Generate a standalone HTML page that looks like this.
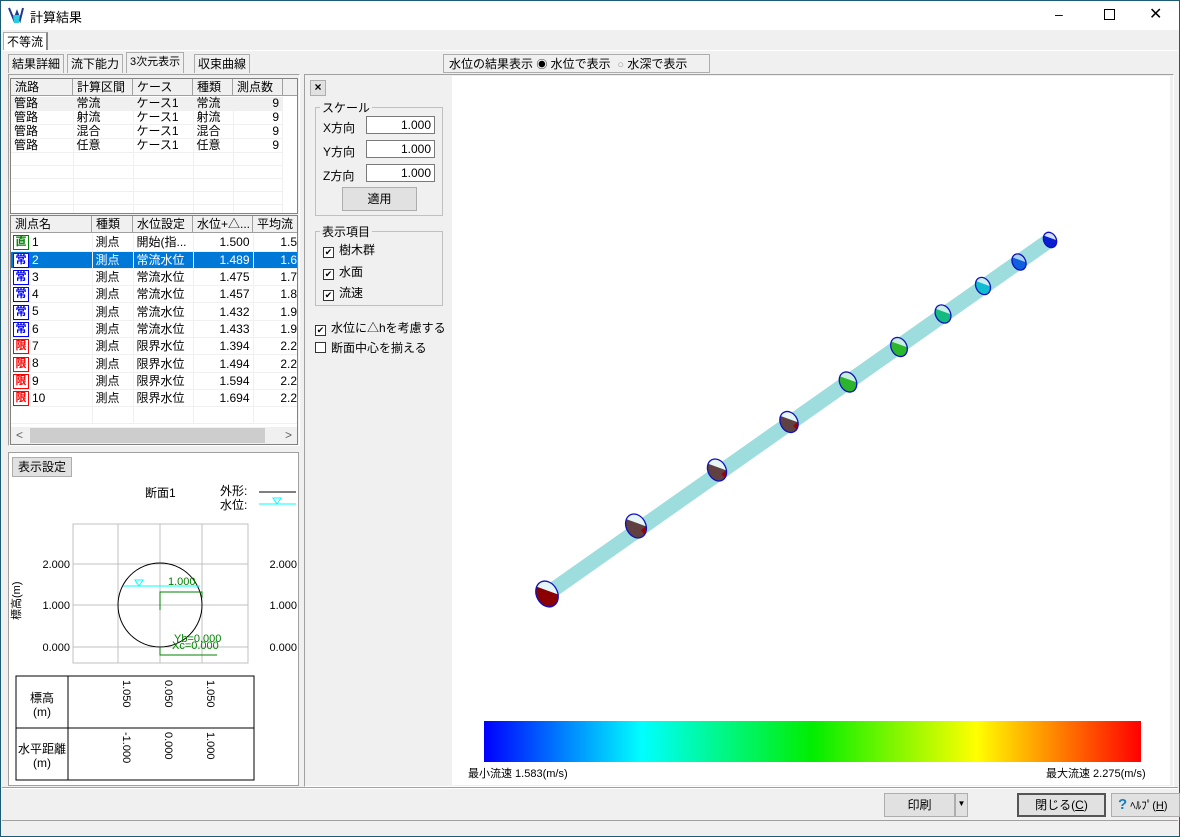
<!DOCTYPE html>
<html><head><meta charset="utf-8"><style>
*{box-sizing:border-box;margin:0;padding:0}
body{width:1180px;height:837px;overflow:hidden;background:#f0f0f0;font-family:"Liberation Sans","Noto Sans CJK JP",sans-serif;font-size:12px;color:#000;position:relative}
.a{position:absolute}
.btn{position:absolute;background:#e1e1e1;border:1px solid #adadad;text-align:center;font-size:12px}
.tab{position:absolute;border:1px solid #adadad;border-bottom:none;background:#f0f0f0;padding:2px 3px;font-size:12px;line-height:14px}
table{border-collapse:collapse}
.lst td{height:13px;line-height:13px;padding:0 3px;border-right:1px solid #f0f0f0;border-bottom:1px solid #f0f0f0;white-space:nowrap;font-size:12px}
.hd{position:absolute;background:#f0f0f0;border-right:1px solid #a0a0a0;border-bottom:1px solid #a0a0a0;height:17px;line-height:16px;padding-left:4px;font-size:12px}
.r td{height:17px;line-height:16px;padding:0 3px;border-right:1px solid #f0f0f0;border-bottom:1px solid #f0f0f0;font-size:12px;white-space:nowrap}
.ic{display:inline-block;width:16px;height:15px;border:1px solid;font-size:11px;line-height:13px;text-align:center;font-weight:bold;vertical-align:middle;margin-right:3px}
.cb{display:inline-block;width:11px;height:11px;border:1px solid #333;background:#fff;vertical-align:-1px;margin-right:5px;font-size:9px;line-height:9px;text-align:center}
.inp{position:absolute;background:#fff;border:1px solid #7a7a7a;text-align:right;padding-right:3px;height:18px;line-height:16px}
</style></head><body>
<div class="a" style="left:0;top:0;width:1180px;height:837px;border:1px solid #1d5a73"></div>
<div class="a" style="left:1px;top:1px;width:1178px;height:29px;background:#fff"></div>
<div class="a" style="left:8px;top:6px;width:16px;height:18px"><svg width="16" height="18"><path d="M1 2L6 14L9 6L12 14L15 2" stroke="#1a3a8a" stroke-width="2" fill="none"/><path d="M5 9h7l-1 8h-5z" fill="#2cc9e0"/></svg></div>
<div class="a" style="left:30px;top:7px;font-size:13px">計算結果</div>
<div class="a" style="left:1055px;top:6px;font-size:14px">–</div>
<div class="a" style="left:1104px;top:9px;width:11px;height:11px;border:1px solid #000"></div>
<div class="a" style="left:1149px;top:4px;font-size:16px">✕</div>

<div class="tab" style="left:3px;top:32px;height:18px;background:#fff;border-right:2px solid #888">不等流</div>
<div class="a" style="left:2px;top:50px;width:1176px;height:1px;background:#fff"></div>
<div class="tab" style="left:8px;top:54px;height:19px">結果詳細</div>
<div class="tab" style="left:67px;top:54px;height:19px">流下能力</div>
<div class="tab" style="left:126px;top:52px;height:21px;background:#f0f0f0;font-size:11px">3次元表示</div>
<div class="tab" style="left:194px;top:54px;height:19px">収束曲線</div>
<div class="a" style="left:443px;top:54px;width:267px;height:19px;border:1px solid #adadad;background:#f0f0f0;padding:2px 5px;font-size:12px;line-height:14px">水位の結果表示 <span style="font-size:11px">◉</span> 水位で表示 &nbsp;<span style="font-size:11px;color:#999">○</span> 水深で表示</div>

<!-- left panel -->
<div class="a" style="left:8px;top:74px;width:292px;height:372px;border:1px solid #fff;border-left-color:#a0a0a0;border-top-color:#a0a0a0"></div>
<div class="a" style="left:10px;top:78px;width:288px;height:136px;background:#fff;border:1px solid #828282;overflow:hidden">
<div class="hd" style="left:0;top:0;width:62px">流路</div><div class="hd" style="left:62px;top:0;width:60px">計算区間</div><div class="hd" style="left:122px;top:0;width:60px">ケース</div><div class="hd" style="left:182px;top:0;width:40px">種類</div><div class="hd" style="left:222px;top:0;width:50px">測点数</div><div class="hd" style="left:272px;top:0;width:20px"></div>
<table class="lst a" style="left:0;top:18px;width:272px">
<tr style="background:#f0f0f0"><td style="width:62px">管路</td><td style="width:60px">常流</td><td style="width:60px">ケース1</td><td style="width:40px">常流</td><td style="text-align:right">9</td></tr>
<tr><td>管路</td><td>射流</td><td>ケース1</td><td>射流</td><td style="text-align:right">9</td></tr>
<tr><td>管路</td><td>混合</td><td>ケース1</td><td>混合</td><td style="text-align:right">9</td></tr>
<tr><td>管路</td><td>任意</td><td>ケース1</td><td>任意</td><td style="text-align:right">9</td></tr>
<tr><td></td><td></td><td></td><td></td><td></td></tr><tr><td></td><td></td><td></td><td></td><td></td></tr><tr><td></td><td></td><td></td><td></td><td></td></tr><tr><td></td><td></td><td></td><td></td><td></td></tr><tr><td></td><td></td><td></td><td></td><td></td></tr>
</table></div>

<div class="a" style="left:10px;top:215px;width:288px;height:230px;background:#fff;border:1px solid #828282;overflow:hidden">
<div class="hd" style="left:0;top:0;width:81px">測点名</div><div class="hd" style="left:81px;top:0;width:41px">種類</div><div class="hd" style="left:122px;top:0;width:60px">水位設定</div><div class="hd" style="left:182px;top:0;width:60px">水位+△...</div><div class="hd" style="left:242px;top:0;width:46px">平均流</div>
<table class="r a" style="left:0;top:18px;width:290px">
<tr><td style="width:81px;padding-left:2px"><span class="ic" style="color:#008000;border-color:#008000">直</span>1</td><td style="width:41px">測点</td><td style="width:60px">開始(指...</td><td style="width:60px;text-align:right">1.500</td><td style="text-align:right">1.5</td></tr>
<tr style="background:#0078d7;color:#fff"><td style="padding-left:2px"><span class="ic" style="color:#00f;border-color:#00f;background:#fff">常</span>2</td><td>測点</td><td>常流水位</td><td style="text-align:right">1.489</td><td style="text-align:right">1.6</td></tr>
<tr><td style="padding-left:2px"><span class="ic" style="color:#00f;border-color:#00f">常</span>3</td><td>測点</td><td>常流水位</td><td style="text-align:right">1.475</td><td style="text-align:right">1.7</td></tr>
<tr><td style="padding-left:2px"><span class="ic" style="color:#00f;border-color:#00f">常</span>4</td><td>測点</td><td>常流水位</td><td style="text-align:right">1.457</td><td style="text-align:right">1.8</td></tr>
<tr><td style="padding-left:2px"><span class="ic" style="color:#00f;border-color:#00f">常</span>5</td><td>測点</td><td>常流水位</td><td style="text-align:right">1.432</td><td style="text-align:right">1.9</td></tr>
<tr><td style="padding-left:2px"><span class="ic" style="color:#00f;border-color:#00f">常</span>6</td><td>測点</td><td>常流水位</td><td style="text-align:right">1.433</td><td style="text-align:right">1.9</td></tr>
<tr><td style="padding-left:2px"><span class="ic" style="color:#f00;border-color:#f00">限</span>7</td><td>測点</td><td>限界水位</td><td style="text-align:right">1.394</td><td style="text-align:right">2.2</td></tr>
<tr><td style="padding-left:2px"><span class="ic" style="color:#f00;border-color:#f00">限</span>8</td><td>測点</td><td>限界水位</td><td style="text-align:right">1.494</td><td style="text-align:right">2.2</td></tr>
<tr><td style="padding-left:2px"><span class="ic" style="color:#f00;border-color:#f00">限</span>9</td><td>測点</td><td>限界水位</td><td style="text-align:right">1.594</td><td style="text-align:right">2.2</td></tr>
<tr><td style="padding-left:2px"><span class="ic" style="color:#f00;border-color:#f00">限</span>10</td><td>測点</td><td>限界水位</td><td style="text-align:right">1.694</td><td style="text-align:right">2.2</td></tr>
<tr><td></td><td></td><td></td><td></td><td></td></tr>
</table>
<div class="a" style="left:0;top:211px;width:288px;height:17px;background:#f0f0f0"><div class="a" style="left:19px;top:1px;width:235px;height:15px;background:#cdcdcd"></div><span class="a" style="left:5px;top:1px;color:#606060">&lt;</span><span class="a" style="left:274px;top:1px;color:#606060">&gt;</span></div>
</div>

<!-- section panel -->
<div class="a" style="left:8px;top:452px;width:291px;height:334px;background:#fff;border:1px solid #a0a0a0"></div>
<div class="btn" style="left:12px;top:457px;width:60px;height:20px;line-height:18px">表示設定</div>
<div class="a" style="left:145px;top:484px">断面1</div>
<div class="a" style="left:220px;top:484px;line-height:14px">外形:<br>水位:</div>
<svg class="a" style="left:8px;top:452px" width="292" height="334">
<line x1="251" y1="40" x2="288" y2="40" stroke="#000"/><line x1="251" y1="52" x2="288" y2="52" stroke="#0ff"/><path d="M265 46h8l-4 6z" fill="none" stroke="#0ff"/>
<rect x="65" y="72" width="175" height="139" fill="none" stroke="#c0c0c0"/>
<g stroke="#c0c0c0"><line x1="110" y1="72" x2="110" y2="211"/><line x1="152" y1="72" x2="152" y2="211"/><line x1="194" y1="72" x2="194" y2="211"/><line x1="65" y1="112" x2="240" y2="112"/><line x1="65" y1="153" x2="240" y2="153"/><line x1="65" y1="195" x2="240" y2="195"/></g>
<circle cx="152" cy="153" r="42" fill="none" stroke="#000"/>
<line x1="115" y1="134" x2="192" y2="134" stroke="#0ff"/><path d="M127 128h8l-4 6z" fill="none" stroke="#0ff"/>
<g stroke="#008000" fill="none"><path d="M152 158V140H194V146"/><path d="M152 195V203H209"/></g>
<text x="160" y="133" font-size="11" fill="#008000">1.000</text>
<text x="166" y="190" font-size="11" fill="#008000">Yb=0.000</text>
<text x="164" y="197" font-size="11" fill="#008000">Xc=0.000</text>
<g font-size="11" text-anchor="end"><text x="62" y="116">2.000</text><text x="62" y="157">1.000</text><text x="62" y="199">0.000</text><text x="289" y="116">2.000</text><text x="289" y="157">1.000</text><text x="289" y="199">0.000</text></g>
<text transform="translate(12,168) rotate(-90)" font-size="11">標高(m)</text>
<rect x="8" y="224" width="238" height="104" fill="none" stroke="#000"/><line x1="60" y1="224" x2="60" y2="328" stroke="#000"/><line x1="8" y1="276" x2="246" y2="276" stroke="#000"/>
<g font-size="11"><text transform="translate(115,228) rotate(90)">1.050</text><text transform="translate(157,228) rotate(90)">0.050</text><text transform="translate(199,228) rotate(90)">1.050</text><text transform="translate(115,280) rotate(90)">-1.000</text><text transform="translate(157,280) rotate(90)">0.000</text><text transform="translate(199,280) rotate(90)">1.000</text></g>
<g font-size="12" text-anchor="middle"><text x="34" y="250">標高</text><text x="34" y="264">(m)</text><text x="34" y="301">水平距離</text><text x="34" y="315">(m)</text></g>
</svg>

<!-- middle panel -->
<div class="a" style="left:304px;top:74px;width:870px;height:713px;border:1px solid #a0a0a0;border-right-color:#fff;border-bottom-color:#fff"></div>
<div class="btn" style="left:310px;top:80px;width:16px;height:16px;line-height:13px;font-weight:bold">×</div>
<div class="a" style="left:315px;top:107px;width:128px;height:109px;border:1px solid #c0c0c0"></div>
<div class="a" style="left:320px;top:99px;background:#f0f0f0;padding:0 2px">スケール</div>
<div class="a" style="left:323px;top:119px">X方向</div><div class="inp" style="left:366px;top:116px;width:69px">1.000</div>
<div class="a" style="left:323px;top:143px">Y方向</div><div class="inp" style="left:366px;top:140px;width:69px">1.000</div>
<div class="a" style="left:323px;top:167px">Z方向</div><div class="inp" style="left:366px;top:164px;width:69px">1.000</div>
<div class="btn" style="left:342px;top:187px;width:75px;height:24px;line-height:22px">適用</div>
<div class="a" style="left:315px;top:231px;width:128px;height:75px;border:1px solid #c0c0c0"></div>
<div class="a" style="left:320px;top:223px;background:#f0f0f0;padding:0 2px">表示項目</div>
<div class="a" style="left:323px;top:241px"><span class="cb">✔</span>樹木群</div>
<div class="a" style="left:323px;top:263px"><span class="cb">✔</span>水面</div>
<div class="a" style="left:323px;top:284px"><span class="cb">✔</span>流速</div>
<div class="a" style="left:315px;top:319px"><span class="cb">✔</span>水位に△hを考慮する</div>
<div class="a" style="left:315px;top:339px"><span class="cb"></span>断面中心を揃える</div>

<!-- 3D view -->
<div class="a" style="left:452px;top:76px;width:718px;height:709px;background:#fff"></div>
<svg class="a" style="left:0;top:0" width="1180" height="837">
<defs><clipPath id="ce"><ellipse cx="0" cy="0" rx="0.78" ry="1"/></clipPath></defs>
<line x1="547" y1="594" x2="1050" y2="240" stroke="#9edddd" stroke-width="15"/>
<g id="E">
<g transform="translate(547,594) scale(13.5) rotate(-28)"><g clip-path="url(#ce)"><rect x="-1" y="-1" width="2" height="2" fill="#8b0000"/><rect x="-1" y="-1" width="2" height="0.75" fill="#e6f6f6" transform="rotate(48)"/></g><ellipse rx="0.78" ry="1" fill="none" stroke="#1010c0" stroke-width="1.3" vector-effect="non-scaling-stroke"/></g>
<g transform="translate(636,526) scale(12.5) rotate(-28)"><g clip-path="url(#ce)"><rect x="-1" y="-1" width="2" height="2" fill="#604040"/><rect x="0.1" y="0.5" width="1" height="1" fill="#a00000" transform="rotate(-10)"/><rect x="-1" y="-1" width="2" height="0.75" fill="#e6f6f6" transform="rotate(48)"/></g><ellipse rx="0.78" ry="1" fill="none" stroke="#1010c0" stroke-width="1.3" vector-effect="non-scaling-stroke"/></g>
<g transform="translate(717,470) scale(11.5) rotate(-28)"><g clip-path="url(#ce)"><rect x="-1" y="-1" width="2" height="2" fill="#604040"/><rect x="0.1" y="0.5" width="1" height="1" fill="#a00000" transform="rotate(-10)"/><rect x="-1" y="-1" width="2" height="0.75" fill="#e6f6f6" transform="rotate(48)"/></g><ellipse rx="0.78" ry="1" fill="none" stroke="#1010c0" stroke-width="1.3" vector-effect="non-scaling-stroke"/></g>
<g transform="translate(789,422) scale(11) rotate(-28)"><g clip-path="url(#ce)"><rect x="-1" y="-1" width="2" height="2" fill="#604040"/><rect x="0.1" y="0.5" width="1" height="1" fill="#a00000" transform="rotate(-10)"/><rect x="-1" y="-1" width="2" height="0.75" fill="#e6f6f6" transform="rotate(48)"/></g><ellipse rx="0.78" ry="1" fill="none" stroke="#1010c0" stroke-width="1.3" vector-effect="non-scaling-stroke"/></g>
<g transform="translate(848,382) scale(10.5) rotate(-28)"><g clip-path="url(#ce)"><rect x="-1" y="-1" width="2" height="2" fill="#2db42d"/><rect x="-1" y="-1" width="2" height="0.75" fill="#c8eede" transform="rotate(48)"/></g><ellipse rx="0.78" ry="1" fill="none" stroke="#1010c0" stroke-width="1.3" vector-effect="non-scaling-stroke"/></g>
<g transform="translate(899,347) scale(10) rotate(-28)"><g clip-path="url(#ce)"><rect x="-1" y="-1" width="2" height="2" fill="#2ab82a"/><rect x="-1" y="-1" width="2" height="0.75" fill="#c8eede" transform="rotate(48)"/></g><ellipse rx="0.78" ry="1" fill="none" stroke="#1010c0" stroke-width="1.3" vector-effect="non-scaling-stroke"/></g>
<g transform="translate(943,314) scale(9.5) rotate(-28)"><g clip-path="url(#ce)"><rect x="-1" y="-1" width="2" height="2" fill="#12bb80"/><rect x="-1" y="-1" width="2" height="0.75" fill="#c8eee8" transform="rotate(48)"/></g><ellipse rx="0.78" ry="1" fill="none" stroke="#1010c0" stroke-width="1.3" vector-effect="non-scaling-stroke"/></g>
<g transform="translate(983,286) scale(9) rotate(-28)"><g clip-path="url(#ce)"><rect x="-1" y="-1" width="2" height="2" fill="#10bcd0"/><rect x="-1" y="-1" width="2" height="0.75" fill="#c8eef0" transform="rotate(48)"/></g><ellipse rx="0.78" ry="1" fill="none" stroke="#1010c0" stroke-width="1.3" vector-effect="non-scaling-stroke"/></g>
<g transform="translate(1019,262) scale(8.5) rotate(-28)"><g clip-path="url(#ce)"><rect x="-1" y="-1" width="2" height="2" fill="#1060e0"/><rect x="-1" y="-1" width="2" height="0.75" fill="#a8d0f0" transform="rotate(48)"/></g><ellipse rx="0.78" ry="1" fill="none" stroke="#1010c0" stroke-width="1.3" vector-effect="non-scaling-stroke"/></g>
<g transform="translate(1050,240) scale(8) rotate(-28)"><g clip-path="url(#ce)"><rect x="-1" y="-1" width="2" height="2" fill="#0a20d0"/><rect x="-1" y="-1" width="2" height="0.75" fill="#d0e0f8" transform="rotate(48)"/></g><ellipse rx="0.78" ry="1" fill="none" stroke="#1010c0" stroke-width="1.3" vector-effect="non-scaling-stroke"/></g>
</g>
</svg>
<div class="a" style="left:484px;top:721px;width:657px;height:41px;background:linear-gradient(to right,#0000ff 0%,#00ffff 24%,#00ee00 50%,#ffff00 75%,#ff0000 100%)"></div>
<div class="a" style="left:468px;top:765px;font-size:11px">最小流速 1.583(m/s)</div>
<div class="a" style="left:1046px;top:765px;font-size:11px">最大流速 2.275(m/s)</div>

<div class="a" style="left:2px;top:787px;width:1176px;height:2px;border-top:1px solid #a0a0a0;border-bottom:1px solid #fff"></div>
<div class="btn" style="left:884px;top:793px;width:71px;height:24px;line-height:22px">印刷</div>
<div class="btn" style="left:955px;top:793px;width:13px;height:24px;line-height:20px;font-size:8px">▼</div>
<div class="btn" style="left:1017px;top:793px;width:89px;height:24px;line-height:21px;border:2px solid #555">閉じる(<u>C</u>)</div>
<div class="btn" style="left:1111px;top:793px;width:69px;height:24px;line-height:22px;text-align:left;padding-left:6px;font-size:11px"><b style="color:#1080c0;font-size:15px">?</b> ﾍﾙﾌﾟ(<u>H</u>)</div>
<div class="a" style="left:2px;top:820px;width:1176px;height:1px;background:#a0a0a0"></div>
</body></html>
